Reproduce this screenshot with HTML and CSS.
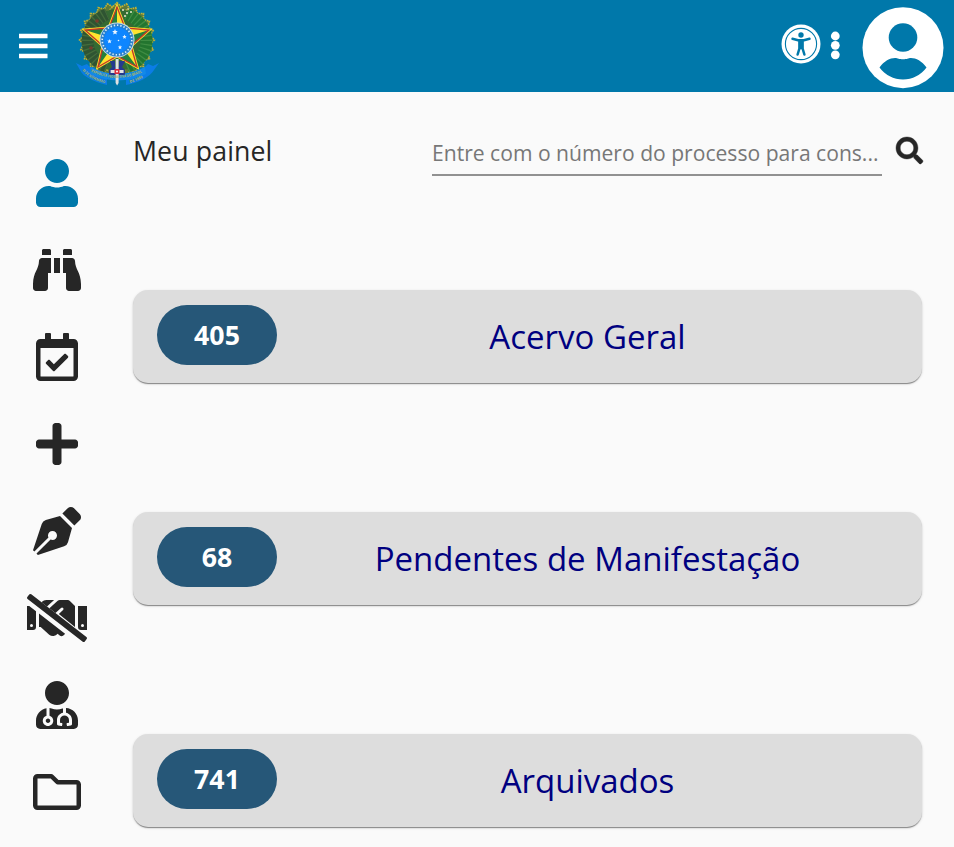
FILE: index.html
```
<!DOCTYPE html>
<html lang="pt-BR">
<head>
<meta charset="utf-8">
<title>Meu painel</title>
<link rel="stylesheet" href="styles.css">
</head>
<body>
<header class="topbar">
  <svg class="menu" viewBox="0 0 30 28"><path d="M1 4h28.500M1 14h28.500M1 24h28.500" stroke="#fff" stroke-width="4.600"/></svg>
  <svg class="crest" viewBox="0 0 80 88">
    <g fill="#5d7838" stroke="#c0b236" stroke-width="1.600" stroke-dasharray="1.600 .8">
      <rect id="ray" x="12.500" y="12.500" width="53" height="53"/>
      <use href="#ray" transform="rotate(15 39 39)"/><use href="#ray" transform="rotate(30 39 39)"/><use href="#ray" transform="rotate(45 39 39)"/><use href="#ray" transform="rotate(60 39 39)"/><use href="#ray" transform="rotate(75 39 39)"/>
    </g>
    <circle cx="39" cy="39" r="31" fill="#356a33"/>
    <g fill="none" stroke-width="12">
      <path d="M29 66C2 55 4 24 29 13" stroke="#2f5432"/>
      <path d="M49 66C76 55 74 24 49 13" stroke="#23752f"/>
      <path d="M29 66C2 55 4 24 29 13" stroke="#446c3c" stroke-dasharray="1.300 3"/>
      <path d="M49 66C76 55 74 24 49 13" stroke="#3f8c43" stroke-dasharray="1.300 3"/>
    </g>
    <g fill="#e9e6ca"><circle cx="45" cy="9" r="1"/><circle cx="49" cy="12" r="1"/><circle cx="53" cy="11" r="1"/><circle cx="47" cy="15" r="1"/><circle cx="50" cy="8" r=".8"/></g>
    <g fill="#793b2c"><circle cx="19" cy="20" r="1.800"/><circle cx="13" cy="47" r="1.800"/></g>
    <path d="M39 6l8 21 24 2-18 16 6 21-20-11-19 11 5-21L7 29l24-2z" fill="#ffe32e" stroke="#ffe32e" stroke-width="3"/>
    <path d="M39 6v33l-8-12zM71 29L39 39l14 6zM59 66L39 39v16zM20 66l19-27-14 6zM7 29l32 10-8-12z" fill="#26803b"/>
    <path d="M39 6l8 21 24 2-18 16 6 21-20-11-19 11 5-21L7 29l24-2z" fill="none" stroke="#c33728" stroke-width="1.300"/>
    <circle cx="39" cy="39" r="17.500" fill="#c9dfe2"/>
    <circle cx="39" cy="39" r="15" fill="#1681ea" stroke="#2b80c8" stroke-width="3"/>
    <circle cx="39" cy="39" r="14.800" fill="none" stroke="#d8edff" stroke-width="1.700" stroke-dasharray="1.400 1.900"/>
    <circle cx="39" cy="39" r="12.600" fill="#0e86ff"/>
    <g fill="#e9f5ff"><path d="M37 28l.8 1.900 2 .2-1.500 1.400.4 2-1.700-1-1.800 1 .5-2-1.500-1.400 2-.2zM46.500 33.500l.6 1.500h1.600l-1.200 1.100.3 1.600-1.300-.8-1.300.8.3-1.600-1.200-1.100h1.600zM31.500 38l.6 1.500h1.700l-1.200 1.100.3 1.700-1.400-.8-1.400.8.3-1.700-1.200-1.100h1.700zM42 44l.6 1.500h1.600l-1.200 1.100.3 1.600-1.300-.8-1.300.8.3-1.600-1.200-1.100h1.600z"/><circle cx="40.500" cy="39.500" r=".8"/></g>
    <path d="M-2 62l6 3 5-2c5 6 10 8 20 11v10C17 81 5 76 2 69zM81 62l-6 3-5-2c-5 6-12 9-22 12v9c12-2 24-8 28-15z" fill="#0b7de6"/>
    <path d="M13 66q26 14 54 0l1 7q-28 13-56 0z" fill="#1289e8"/>
    <path d="M32 60h5v6h4v-6h6l-3 6 3 3v5H31v-5l3-3z" fill="#243a8e"/>
    <path d="M37.600 58h3v11h5v3h-5v10l-1.500 2.500-1.500-2.500V72h-5v-3h5z" fill="#e0e2e2"/>
    <path d="M36.500 68h5v5h-5z" fill="#d82c3c"/><circle cx="39" cy="70.500" r="1" fill="#fff"/>
    <path id="scroll" d="M13 70.500q26 13 53 0" fill="none"/><path id="date" d="M4 69q8 10 24 13.500" fill="none"/><path id="year" d="M52 82q11-3 18-9" fill="none"/>
    <g class="ribbon"><text><textPath href="#scroll" textLength="53" lengthAdjust="spacingAndGlyphs">REPÚBLICA FEDERATIVA DO BRASIL</textPath></text><text><textPath href="#date" textLength="27" lengthAdjust="spacingAndGlyphs">15 DE NOVEMBRO</textPath></text><text><textPath href="#year" textLength="14" lengthAdjust="spacingAndGlyphs">DE 1889</textPath></text></g>
  </svg>
  <div class="tools">
    <svg class="access" viewBox="0 0 40 40"><circle cx="20" cy="20" r="19.500" fill="#fff"/><circle cx="20" cy="20" r="15.600" fill="none" stroke="#0078aa" stroke-width="1.100"/><circle cx="20" cy="11" r="2.700" fill="#0078aa"/><path d="M11.500 14.800l5.500 1.500h6l5.500-1.500M20 17v7M18.400 17v7.500l-1.800 6M21.600 17v7.500l1.800 6" fill="none" stroke="#0078aa" stroke-width="2.500" stroke-linecap="round"/></svg>
    <svg class="dots" viewBox="0 0 10 28" fill="#fff"><circle cx="5.300" cy="5" r="4.400"/><circle cx="5.300" cy="14.300" r="4.400"/><circle cx="5.300" cy="23.800" r="4.400"/></svg>
    <svg class="avatar" viewBox="0 0 82 82"><circle cx="41" cy="40.700" r="40.500" fill="#fff"/><circle cx="41" cy="30.500" r="14.300" fill="#0078aa"/><path d="M17.500 60.500C22 54 28 51 33 51c3 0 4 1.300 8 1.300S46 51 49 51c5 0 11 3 15.500 9.500a29 29 0 0 1-47 0z" fill="#0078aa"/></svg>
  </div>
</header>
<div class="layout">
  <nav class="sidebar">
    <svg class="active" viewBox="0 0 448 512"><path d="M224 256c70.7 0 128-57.3 128-128S294.7 0 224 0 96 57.3 96 128s57.3 128 128 128zm89.6 32h-16.700c-22.200 10.200-46.900 16-72.900 16s-50.600-5.800-72.900-16h-16.700C60.200 288 0 348.200 0 422.400V464c0 26.500 21.500 48 48 48h352c26.500 0 48-21.500 48-48v-41.600c0-74.200-60.200-134.400-134.400-134.400z"/></svg>
    <svg viewBox="0 0 512 512"><path d="M416 48c0-8.840-7.160-16-16-16h-64c-8.840 0-16 7.160-16 16v48h96V48zM63.910 159.990C61.400 253.840 3.460 274.220 0 404v44c0 17.670 14.330 32 32 32h96c17.670 0 32-14.330 32-32V288h32V128H95.840c-17.630 0-31.450 14.370-31.930 31.990zm384.180 0c-.480-17.620-14.300-31.990-31.930-31.990H320v160h32v160c0 17.670 14.330 32 32 32h96c17.670 0 32-14.330 32-32v-44c-3.460-129.780-61.400-150.160-63.910-244.010zM176 32h-64c-8.840 0-16 7.160-16 16v48h96V48c0-8.840-7.160-16-16-16zm48 256h64V128h-64v160z"/></svg>
    <svg viewBox="0 0 448 512"><path d="M400 64h-48V12c0-6.627-5.373-12-12-12h-40c-6.627 0-12 5.373-12 12v52H160V12c0-6.627-5.373-12-12-12h-40c-6.627 0-12 5.373-12 12v52H48C21.490 64 0 85.490 0 112v352c0 26.510 21.490 48 48 48h352c26.510 0 48-21.490 48-48V112c0-26.510-21.490-48-48-48zm-6 400H54a6 6 0 0 1-6-6V160h352v298a6 6 0 0 1-6 6zm-52.849-200.650L198.842 404.519c-4.705 4.667-12.303 4.637-16.971-.068l-75.091-75.699c-4.667-4.705-4.637-12.303.068-16.971l22.719-22.536c4.705-4.667 12.303-4.637 16.970.069l44.104 44.461 111.072-110.181c4.705-4.667 12.303-4.637 16.971.068l22.536 22.718c4.667 4.705 4.636 12.303-.069 16.970z"/></svg>
    <svg viewBox="0 0 448 512"><path d="M416 208H272V64c0-17.670-14.330-32-32-32h-32c-17.670 0-32 14.330-32 32v144H32c-17.670 0-32 14.330-32 32v32c0 17.670 14.330 32 32 32h144v144c0 17.670 14.330 32 32 32h32c17.670 0 32-14.330 32-32V304h144c17.670 0 32-14.330 32-32v-32c0-17.670-14.330-32-32-32z"/></svg>
    <svg viewBox="0 0 512 512"><path d="M136.600 138.790a64.003 64.003 0 0 0-43.310 41.350L0 460l14.690 14.690L164.800 324.580c-2.990-6.260-4.800-13.180-4.800-20.580 0-26.510 21.490-48 48-48s48 21.490 48 48-21.490 48-48 48c-7.400 0-14.320-1.810-20.580-4.800L37.310 497.310 52 512l279.860-93.290a64.003 64.003 0 0 0 41.350-43.310L416 224 288 96l-151.400 42.790zm361.340-64.620l-60.110-60.110c-18.750-18.750-49.160-18.750-67.910 0l-56.550 56.550 128.020 128.020 56.550-56.550c18.750-18.750 18.750-49.150 0-67.910z"/></svg>
    <svg viewBox="0 0 640 512"><path fill-rule="evenodd" d="M0 128.200V384h64a32 32 0 0 0 32-32V184l-72.200-55.800zM48 320a16 16 0 1 1 0 32 16 16 0 0 1 0-32zM544 128.200V352a32 32 0 0 0 32 32h64V128.200zM592 352a16 16 0 1 1 0-32 16 16 0 0 1 0 32z"/><path d="M128 208.700v143.200h18.300l90.500 81.900a64 64 0 0 0 90-9.300l.2-.2 17.900 15.500a37.200 37.200 0 0 0 52.300-5.400l8.800-10.800zM303.300 202.700l59.600-54.600a16 16 0 0 1 21.600 23.600l-44.900 41.100 159 128.500 13.400 10.700V128l-54.600-54.600A32 32 0 0 0 434.800 64h-85.900a32 32 0 0 0-21.600 8.400l-88.100 80.700zM213.500 133.200L289.100 64h-83.900a64 64 0 0 0-45.200 18.700l-4.600 4.600z"/><path d="M633.800 458.100L45.500 3.400A16 16 0 0 0 23 6.200L3.400 31.500A16 16 0 0 0 6.200 53.900l588.400 454.700a16 16 0 0 0 22.400-2.800l19.600-25.300a16 16 0 0 0-2.800-22.400z"/></svg>
    <svg viewBox="0 0 448 512"><path d="M224 256c70.700 0 128-57.300 128-128S294.700 0 224 0 96 57.300 96 128s57.300 128 128 128zM104 424c0 13.300 10.700 24 24 24s24-10.700 24-24-10.700-24-24-24-24 10.700-24 24zm216-135.400v49c36.500 7.400 64 39.800 64 78.400v41.700c0 7.600-5.400 14.200-12.900 15.700l-32.200 6.400c-4.300.9-8.500-1.900-9.400-6.300l-3.100-15.700c-.9-4.300 1.900-8.600 6.300-9.400l19.300-3.900V416c0-62.800-96-65.100-96 1.900v26.700l19.300 3.900c4.300.9 7.100 5.100 6.300 9.400l-3.100 15.700c-.9 4.300-5.100 7.100-9.400 6.300l-31.200-4.200c-7.900-1.100-13.800-7.800-13.800-15.900V416c0-38.600 27.500-70.900 64-78.400v-45.200c-2.200.7-4.400 1.100-6.600 1.900-18 6.300-37.300 9.800-57.400 9.800s-39.400-3.500-57.400-9.800c-7.400-2.600-14.900-4.200-22.600-5.200v81.600c23.100 6.900 40 28.100 40 53.400 0 30.900-25.100 56-56 56s-56-25.100-56-56c0-25.300 16.900-46.500 40-53.400v-80.400C48.500 301 0 355.800 0 422.400v44.800C0 491.900 20.100 512 44.800 512h358.400c24.700 0 44.800-20.100 44.800-44.800v-44.800c0-72-56.800-130.300-128-133.800z"/></svg>
    <svg viewBox="0 0 512 512"><path d="M464 128H272l-54.630-54.630c-6-6-14.140-9.370-22.630-9.370H48C21.490 64 0 85.490 0 112v288c0 26.510 21.490 48 48 48h416c26.510 0 48-21.490 48-48V176c0-26.510-21.490-48-48-48zm0 272H48V112h140.120l54.630 54.630c6 6 14.140 9.370 22.630 9.370H464v224z"/></svg>
  </nav>
  <main class="content">
    <div class="heading">
      <h1>Meu painel</h1>
      <input class="query" type="text" placeholder="Entre com o número do processo para cons...">
      <svg class="search" viewBox="0 0 512 512"><path d="M505 442.700L405.300 343c-4.500-4.500-10.600-7-17-7H372c27.600-35.300 44-79.700 44-128C416 93.100 322.900 0 208 0S0 93.100 0 208s93.100 208 208 208c48.300 0 92.700-16.400 128-44v16.300c0 6.400 2.500 12.500 7 17l99.700 99.700c9.400 9.400 24.600 9.400 33.900 0l28.300-28.300c9.400-9.400 9.400-24.600.1-34zM208 336c-70.700 0-128-57.200-128-128 0-70.700 57.200-128 128-128 70.700 0 128 57.200 128 128 0 70.700-57.200 128-128 128z"/></svg>
    </div>
    <section class="cards">
      <article class="card"><span class="count">405</span><h2>Acervo Geral</h2></article>
      <article class="card"><span class="count">68</span><h2>Pendentes de Manifestação</h2></article>
      <article class="card"><span class="count">741</span><h2>Arquivados</h2></article>
    </section>
  </main>
</div>
</body>
</html>
```
FILE: styles.css
```
* { box-sizing: border-box; }
body { margin: 0; height: 847px; overflow: hidden; background: #fafafa; color: #262626; font-family: "Open Sans", sans-serif; }
svg { display: block; flex: none; overflow: visible; }
.topbar { display: flex; height: 92px; padding-left: 18px; background: #0078aa; }
.menu { width: 30px; height: 28px; margin-top: 32px; }
.crest { width: 80px; height: 88px; margin: 1px 0 0 30px; }
.ribbon { font-size: 3.8px; font-weight: 700; fill: #a9b561; }
.tools { display: flex; margin-left: auto; padding-right: 10px; }
.access { width: 40px; height: 40px; margin-top: 24px; }
.dots { width: 10px; height: 28px; margin: 31px 22px 0 9px; }
.avatar { width: 82px; height: 82px; margin-top: 7px; }
.layout { display: flex; }
.sidebar { display: flex; flex: none; flex-direction: column; align-items: center; gap: 39px; width: 113px; padding-top: 67px; }
.sidebar svg { height: 48px; fill: #262626; }
.sidebar .active { fill: #0078aa; }
.content { flex: 1; min-width: 0; padding: 40px 32px 0 20px; }
.heading { display: flex; height: 44px; }
h1 { flex: none; margin: 0; width: 299px; font-size: 26.7px; font-weight: 400; line-height: 38px; letter-spacing: .12px; }
.query { flex: none; width: 450px; height: 44px; padding: 0 0 2px; border: 0; border-bottom: 2px solid #919191; outline: 0; background: transparent; font: 21.1px "Open Sans", sans-serif; }
.query::placeholder { color: #777; opacity: 1; }
.search { width: 27px; height: 27px; margin: 5px 0 0 14px; fill: #262626; stroke: #262626; stroke-width: 8; }
.cards { display: grid; gap: 129px; margin-top: 114px; }
.card { display: flex; height: 93px; padding: 15px 24px; border-radius: 15px; background: #ddd; box-shadow: 0 2px 1px -1px rgba(0,0,0,.25), 0 1px 1px rgba(0,0,0,.2), 0 1px 3px rgba(0,0,0,.14); }
.count { width: 120px; height: 60px; border-radius: 30px; background: #265778; color: #fff; font-size: 26.7px; font-weight: 700; line-height: 60px; text-align: center; }
h2 { flex: 1; margin: 0; color: #000080; font-size: 33px; font-weight: 400; line-height: 63px; text-align: center; }
```
